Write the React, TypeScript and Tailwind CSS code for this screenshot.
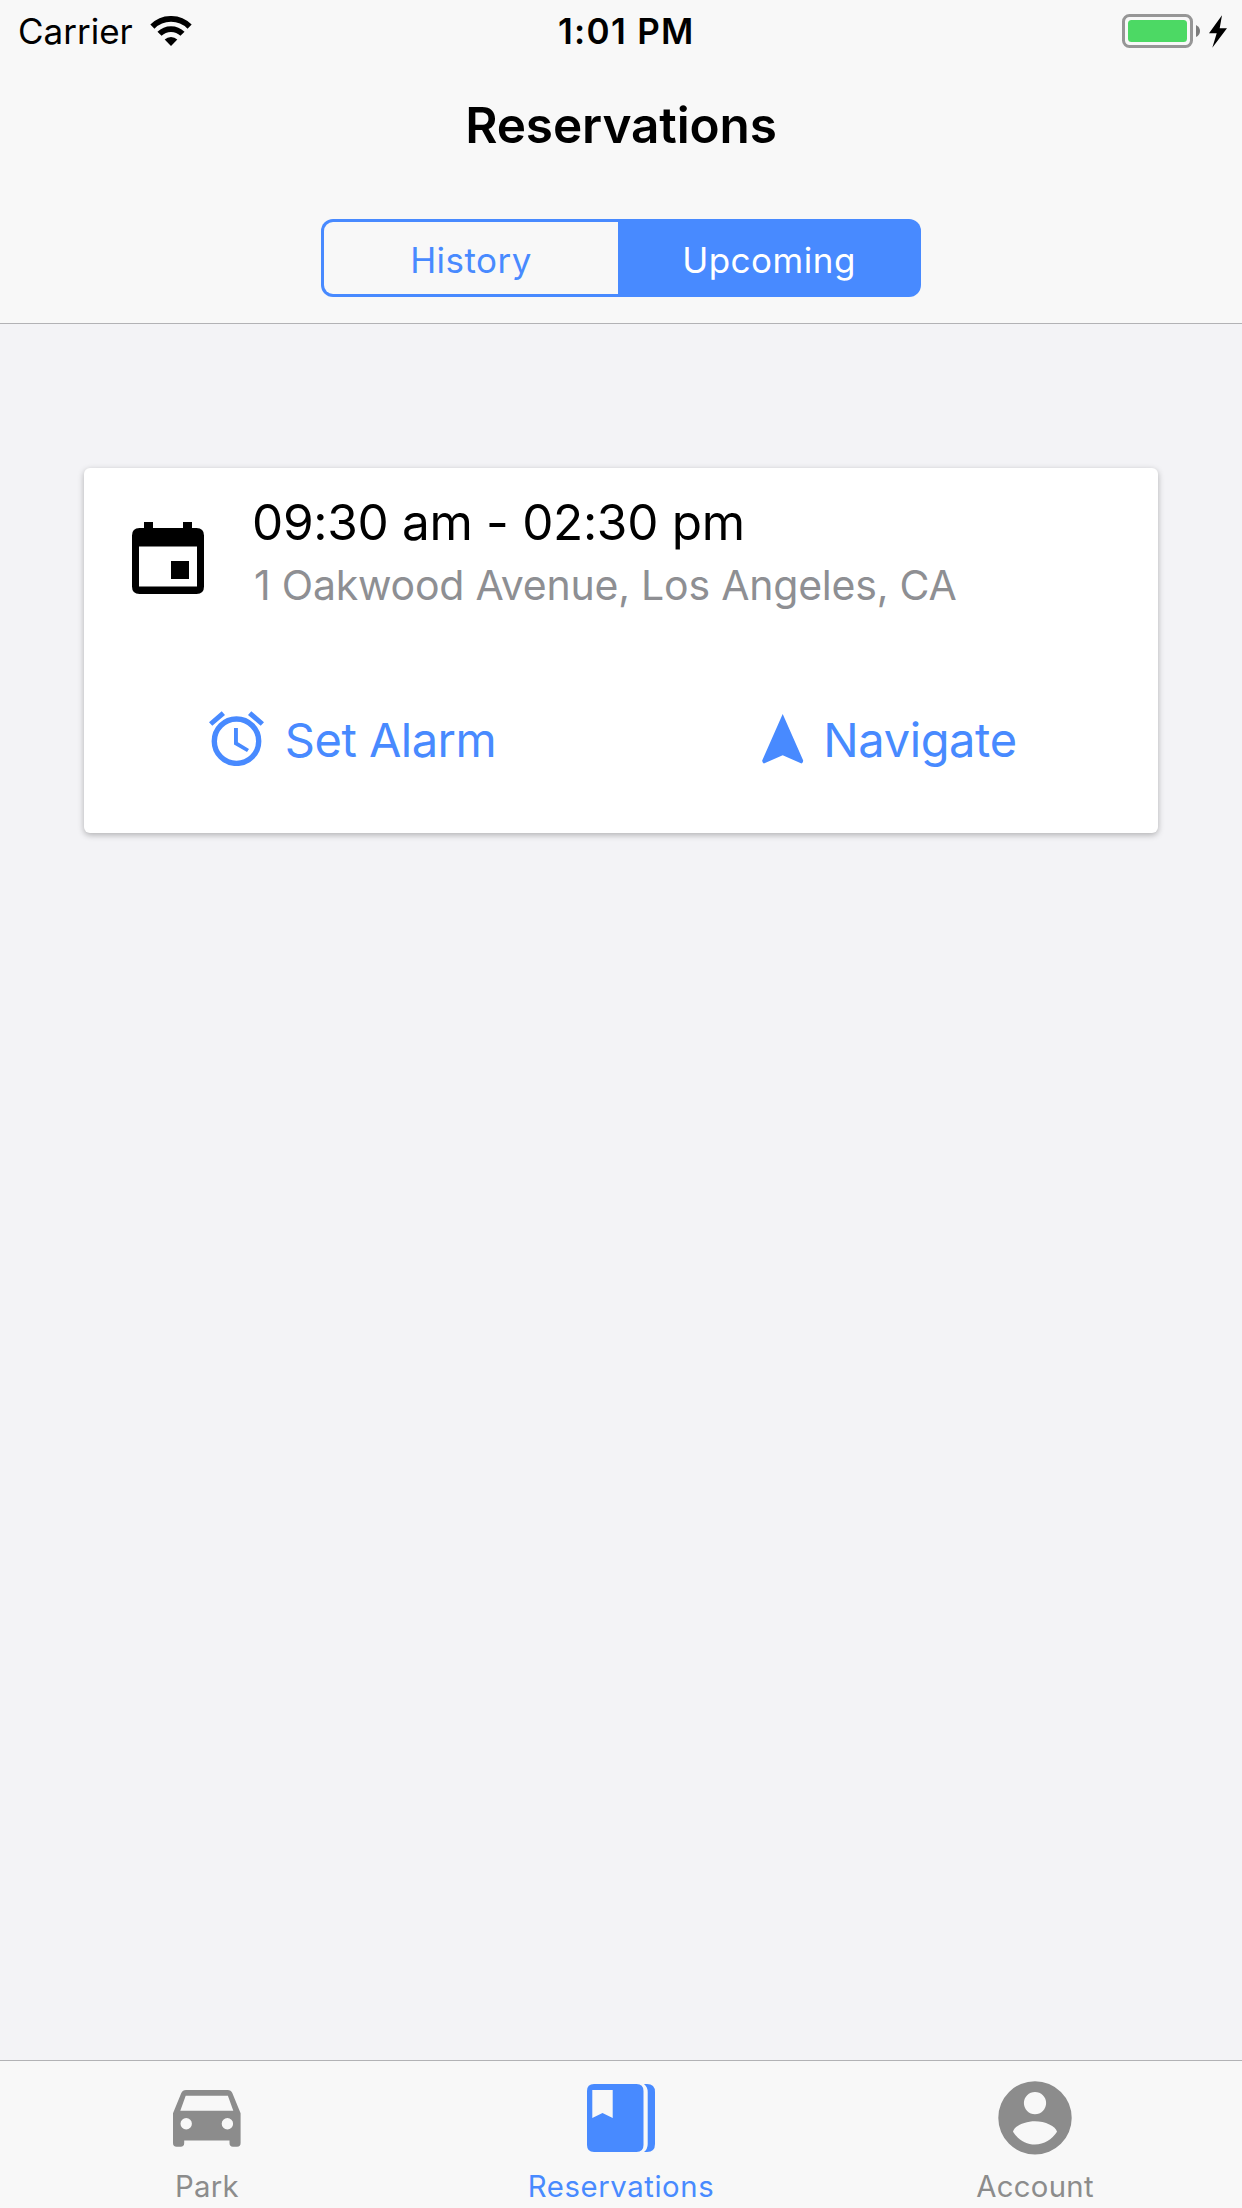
import React, { type ReactNode } from "react";

function WifiIcon() {
  return (
    <svg className="h-[30px] w-[42px]" viewBox="0 0 42 30" fill="none" stroke="#000" strokeWidth="5.8">
      <path d="M2.4 10.6A26.3 26.3 0 0 1 39.6 10.6" />
      <path d="M9.5 17.8A16.3 16.3 0 0 1 32.5 17.8" />
      <path d="M14.7 23.6A9 9 0 0 1 27.3 23.6L21 30Z" fill="#000" stroke="none" />
    </svg>
  );
}

function BatteryIcon() {
  return (
    <svg className="-mt-px h-[34px] w-[105px]" viewBox="0 0 105 34">
      <rect x="1.5" y="1.5" width="68" height="31" rx="6" fill="none" stroke="#969696" strokeWidth="3" />
      <rect x="6" y="6" width="59" height="22" rx="3.5" fill="#4cd964" />
      <path d="M74 11Q78 13 78 17T74 23Z" fill="#7c7c7c" />
      <path d="M100 1.3L87 19.3H94.7L90.3 33.7L105 14.3H97.7Z" fill="#000" />
    </svg>
  );
}

function CalendarIcon() {
  return (
    <svg className="h-[72px] w-[72px]" viewBox="0 0 72 72" fill="#000">
      <path
        fillRule="evenodd"
        d="M12 0H21V6H51V0H60V6H64.5Q72 6 72 13.500V64.5Q72 72 64.5 72H7.500Q0 72 0 64.5V13.500Q0 6 7.500 6H12ZM7 24.500V64.500H65V24.500Z"
      />
      <path d="M39 39H57V57H39Z" />
    </svg>
  );
}

function AlarmIcon() {
  return (
    <svg className="mb-[3px] h-[55px] w-[55px]" viewBox="0 0 55 55" fill="currentColor">
      <circle cx="27.5" cy="30.2" r="22.2" fill="none" stroke="currentColor" strokeWidth="5.4" />
      <path d="M0 11.200L12.700 .2L16 3.900L3.300 14.800ZM55 11.200L42.300 .2L39 3.900L51.700 14.800Z" />
      <path d="M25 17H28.900V31.300L40 38L38 41L25 33.500Z" />
    </svg>
  );
}

function NavigateIcon() {
  return (
    <svg className="mb-[3px] h-[50px] w-[42px]" viewBox="0 0 42 50" fill="currentColor">
      <path d="M20.700 0L.2 46.500Q0 48.500 1.900 49.500L20.700 41.300L39.500 49.500Q41.400 48.500 41.200 46.500Z" />
    </svg>
  );
}

function CarIcon() {
  return (
    <svg className="h-[57px] w-[68px]" viewBox="0 0 68 57" fill="currentColor">
      <path
        fillRule="evenodd"
        d="M13 0H54.600Q58 0 59.300 3L67.600 23.300V53Q67.600 56.800 64 56.800H60Q56.500 56.800 56.500 53V50.500H11.200V53Q11.200 56.800 7.600 56.800H3.600Q0 56.800 0 53V23.300L8.300 3Q9.600 0 13 0ZM12.700 5.700L7.300 20.700H60.300L54.900 5.700ZM13.200 28A5.700 5.700 0 1 0 13.200 39.400A5.700 5.700 0 1 0 13.200 28ZM54.400 28A5.700 5.700 0 1 0 54.400 39.400A5.700 5.700 0 1 0 54.400 28Z"
      />
    </svg>
  );
}

function BookIcon() {
  return (
    <svg className="h-[68px] w-[68px]" viewBox="0 0 68 68" fill="currentColor">
      <path
        fillRule="evenodd"
        d="M7 0H49.500Q56.500 0 56.500 7V61Q56.500 68 49.500 68H7Q0 68 0 61V7Q0 0 7 0ZM5.300 6V34L15.500 29L25.700 34V6Z"
      />
      <path d="M57 0H60Q68 0 68 8V60Q68 68 60 68H57Q60.700 65 60.700 60V8Q60.700 3 57 0Z" />
    </svg>
  );
}

function AccountIcon() {
  return (
    <svg className="h-[74px] w-[74px]" viewBox="0 0 74 74" fill="currentColor">
      <path
        fillRule="evenodd"
        d="M37 .2A36.700 36.700 0 1 0 37 73.600A36.700 36.700 0 1 0 37 .2ZM37 11A11 11 0 1 1 37 33.200A11 11 0 1 1 37 11ZM15 50.800C16 45 27 40.200 37 40.200S58 45 59 50.800C54 58.500 46 63.500 37 63.500S20 58.500 15 50.800Z"
      />
    </svg>
  );
}

function Tab({ icon, label, active = false }: { icon: ReactNode; label: string; active?: boolean }) {
  return (
    <a className={active ? "flex flex-col items-center text-[#488aff]" : "flex flex-col items-center text-[#8c8c8c]"}>
      <span className="flex h-[74px] items-center">{icon}</span>
      <span
        className={
          active
            ? "mt-3 text-[29.3px] leading-10 tracking-[0.6px]"
            : "mt-3 text-[29.3px] leading-10 tracking-[0.3px]"
        }
      >
        {label}
      </span>
    </a>
  );
}

export default function App() {
  return (
    <div className="flex h-[2208px] w-[1242px] flex-col bg-[#f3f3f6] font-['Inter',sans-serif] text-black">
      <header className="h-[324px] border-b border-[#b2b2b5] bg-[#f8f8f8]">
        <div className="grid h-[62px] grid-cols-[558px_1fr_auto] items-center pr-[15px] pl-[18px] text-[35px]">
          <div className="flex items-center gap-[17px]">
            <span>Carrier</span>
            <WifiIcon />
          </div>
          <span className="-ml-[18px] font-semibold tracking-[1.3px]">1:01 PM</span>
          <BatteryIcon />
        </div>
        <h1 className="text-center text-[49.5px] leading-[126px] font-semibold tracking-[-0.1px]">Reservations</h1>
        <div className="mx-auto mt-[31px] grid h-[78px] w-[600px] grid-cols-[294px_1fr] rounded-xl bg-[#488aff] p-[3px] text-[35px] text-[#488aff]">
          <button className="rounded-l-[9px] bg-[#f8f8f8] pt-1 tracking-[0.47px]">History</button>
          <button className="pt-1 pl-0.5 tracking-[0.5px] text-white">Upcoming</button>
        </div>
      </header>

      <main className="flex-1 px-[84px] pt-36">
        <section className="h-[365px] rounded-md bg-white pt-[22px] shadow-[0_2px_6px_rgba(0,0,0,0.28)]">
          <div className="flex items-start gap-12 pl-12">
            <div className="mt-8">
              <CalendarIcon />
            </div>
            <div>
              <h2 className="text-[49.5px] leading-[64px] tracking-[-0.32px]">09:30 am - 02:30 pm</h2>
              <p className="pl-0.5 text-[41px] leading-[62px] tracking-[-0.22px] text-[#8e8f93]">
                1 Oakwood Avenue, Los Angeles, CA
              </p>
            </div>
          </div>
          <div className="mt-[74px] grid h-[100px] grid-cols-2 text-[47px] text-[#488aff]">
            <button className="flex items-center justify-center gap-[21px] tracking-[-0.52px]">
              <AlarmIcon />
              Set Alarm
            </button>
            <button className="flex items-center justify-center gap-[19px] tracking-[-0.39px]">
              <NavigateIcon />
              Navigate
            </button>
          </div>
        </section>
      </main>

      <nav className="grid h-[148px] grid-cols-3 border-t border-[#b2b2b5] bg-[#f8f8f8] pt-5">
        <Tab icon={<CarIcon />} label="Park" />
        <Tab icon={<BookIcon />} label="Reservations" active />
        <Tab icon={<AccountIcon />} label="Account" />
      </nav>
    </div>
  );
}
